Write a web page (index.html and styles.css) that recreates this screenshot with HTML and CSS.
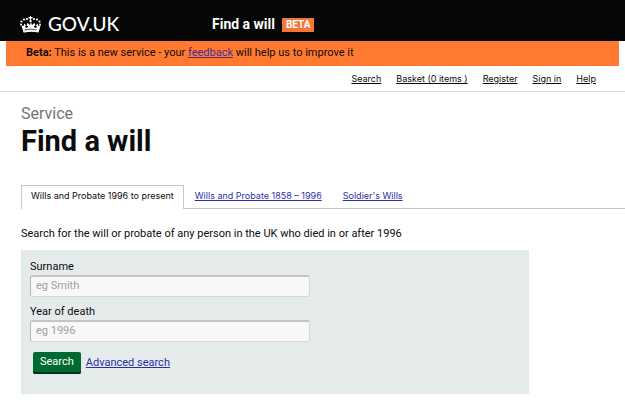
FILE: index.html
```html
<!DOCTYPE html>
<html lang="en">
<head>
  <meta charset="UTF-8">
  <meta name="viewport" content="width=device-width, initial-scale=1.0">
  <title>Find a will</title>
  <link rel="stylesheet" href="styles.css">
</head>
<body>
  <header class="header">
    <a class="logo" href="#">
      <svg class="crown" viewBox="0 0 42 34" fill="#fff" aria-hidden="true">
        <path d="M20 0h2v2h3v3h-3v3h-2V5h-3V2h3z"/>
        <circle cx="21" cy="10" r="2.4"/>
        <circle cx="14" cy="6" r="2.2"/>
        <circle cx="28" cy="6" r="2.2"/>
        <circle cx="8" cy="7" r="2.2"/>
        <circle cx="34" cy="7" r="2.2"/>
        <circle cx="3" cy="11" r="2.2"/>
        <circle cx="39" cy="11" r="2.2"/>
        <circle cx="2" cy="17" r="2"/>
        <circle cx="40" cy="17" r="2"/>
        <path d="M7 33 4 23l-1-4 4 1 2-5 3 4-2 2 2 3c3 0 4-2 4-4l-3-1 2-5 3 2 1 2c2-1 2-2 2-5h2c0 3 0 4 2 5l1-2 3-2 2 5-3 1c0 2 1 4 4 4l2-3-2-2 3-4 2 5 4-1-1 4-3 10c-9-2-19-2-28 0z"/>
        <path d="M9 28c8-2 16-2 24 0" fill="none" stroke="#0b0c0c" stroke-width="1.5"/>
      </svg>
      <span>GOV.UK</span>
    </a>
    <div class="service-name">
      <a href="#">Find a will</a>
      <span class="beta-tag">BETA</span>
    </div>
  </header>

  <div class="banner">
    <strong>Beta:</strong> This is a new service - your <a href="#">feedback</a> will help us to improve it
  </div>

  <nav class="user-nav">
    <a href="#">Search</a>
    <a href="#">Basket (0 items )</a>
    <a href="#">Register</a>
    <a href="#">Sign in</a>
    <a href="#">Help</a>
  </nav>

  <main>
    <div class="title">
      <p class="kicker">Service</p>
      <h1>Find a will</h1>
    </div>

    <nav class="tabs">
      <a class="tab active" href="#">Wills and Probate 1996 to present</a>
      <a class="tab" href="#">Wills and Probate 1858 – 1996</a>
      <a class="tab" href="#">Soldier's Wills</a>
    </nav>

    <p class="intro">Search for the will or probate of any person in the UK who died in or after 1996</p>

    <form class="search-form">
      <label for="surname">Surname</label>
      <input type="text" id="surname" placeholder="eg Smith">
      <label for="year">Year of death</label>
      <input type="text" id="year" placeholder="eg 1996">
      <div class="actions">
        <button type="button">Search</button>
        <a href="#">Advanced search</a>
      </div>
    </form>
  </main>
</body>
</html>
```
FILE: styles.css
```css
/* General */
* {
  box-sizing: border-box;
}

body {
  margin: 0;
  font-family: Roboto, Arial, sans-serif;
  font-size: 11px;
  line-height: 16px;
  color: #0b0c0c;
  background-color: #fff;
}

h1,
p {
  margin: 0;
}

/* Header */
.header {
  display: flex;
  align-items: center;
  padding: 11px 20px 4px;
  background-color: #050606;
}

.header a {
  color: #fff;
  text-decoration: none;
}

.logo {
  display: flex;
  align-items: center;
  gap: 7px;
  width: 192px;
  font-family: Lato, sans-serif;
  font-size: 19px;
  font-weight: 500;
  line-height: 26px;
}

.crown {
  width: 21px;
  height: 17px;
}

.service-name {
  display: flex;
  align-items: center;
  gap: 7px;
  font-size: 14px;
  font-weight: bold;
}

.beta-tag {
  margin-top: 2px;
  padding: 0 4px;
  font-size: 10px;
  line-height: 14px;
  color: #fff;
  background-color: #f47738;
}

/* Beta banner */
.banner {
  margin: 0 6px;
  padding: 4px 20px 5px;
  background-color: #ff7a30;
}

.banner a {
  color: #4c2c92;
}

/* Account links */
.user-nav {
  display: flex;
  justify-content: flex-end;
  gap: 15px;
  padding: 5px 29px 4px;
  border-bottom: 1px solid #dee0e2;
  font-family: Inter, Arial, sans-serif;
  font-size: 9px;
}

.user-nav a {
  color: #0b0c0c;
}

/* Page title */
.title {
  padding: 12px 21px 27px;
}

.kicker {
  font-size: 16px;
  line-height: 20px;
  color: #6f777b;
}

h1 {
  font-size: 29px;
  line-height: 34px;
}

/* Tabs */
.tabs {
  display: flex;
  gap: 1px;
  margin-left: 21px;
  border-bottom: 1px solid #bfc9cb;
  font-family: Inter, Arial, sans-serif;
  font-size: 9px;
}

.tab {
  margin-bottom: -1px;
  padding: 2px 9px 5px;
  border: 1px solid transparent;
  border-bottom: 0;
  color: #2b2fa5;
}

.tab.active {
  border-color: #bfc9cb;
  color: #0b0c0c;
  background-color: #fff;
  text-decoration: none;
}

.intro {
  padding: 17px 21px 8px;
}

/* Search form */
.search-form {
  margin: 0 96px 24px 21px;
  padding: 9px 9px 20px;
  background-color: #e5ebeb;
}

.search-form label {
  display: block;
}

.search-form input {
  display: block;
  width: 100%;
  max-width: 280px;
  height: 22px;
  margin-bottom: 7px;
  padding: 0 5px 2px;
  border: 1px solid #d5d9d9;
  border-top: 2px solid #c1c5c5;
  border-left-color: #b5b9b9;
  border-radius: 3px;
  background-color: #f8f8f8;
  font: inherit;
}

.search-form input::placeholder {
  color: #a0a2a2;
}

.actions {
  display: flex;
  align-items: center;
  gap: 5px;
  padding: 3px 3px 0;
}

.actions button {
  padding: 1px 7px 3px;
  border: 0;
  border-radius: 2px;
  box-shadow: inset 0 -2px 0 #003418;
  font: inherit;
  line-height: 18px;
  color: #fff;
  background-color: #006b31;
  cursor: pointer;
}

.actions a {
  color: #2b2fa5;
}
```
